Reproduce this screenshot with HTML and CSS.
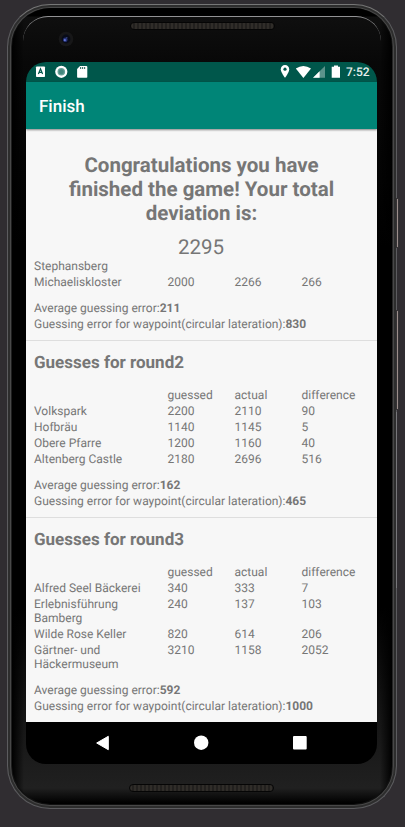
FILE: index.html
```html
<!DOCTYPE html>
<html lang="en">
<head>
<meta charset="utf-8">
<title>Finish</title>
<link rel="stylesheet" href="styles.css">
</head>
<body>
<div class="phone">
  <i class="key power"></i><i class="key volume"></i><i class="edge"></i>
  <div class="body">
    <div class="glass">
      <header class="top">
        <svg class="camera" width="16" height="16" viewBox="0 0 16 16"><circle cx="8" cy="8" r="7.3" fill="#171718"/><circle cx="8" cy="8" r="4.4" fill="#080b18"/><circle cx="7.3" cy="8.7" r="2.3" fill="#263276"/><circle cx="6.8" cy="9.2" r="1.1" fill="#6375d5"/><circle cx="8.8" cy="6.8" r=".8" fill="#34427c"/></svg>
        <div class="speaker"></div>
      </header>
      <main class="screen">
        <div class="status">
          <svg class="left-icons" width="54" height="20" viewBox="0 0 54 20">
            <rect x="1" y="4.5" width="9" height="10.5" rx=".8" fill="#fff"/>
            <path d="M3.4 12 5.5 6.8 7.6 12M4.2 10.3h2.6" fill="none" stroke="#00574b" stroke-width="1.2"/>
            <circle cx="26.3" cy="9.8" r="6.1" fill="#fff"/><circle cx="26.3" cy="9.8" r="3.8" fill="#69a098"/><circle cx="26.3" cy="9.8" r="2.5" fill="#43877d"/>
            <path d="M45 4h6.3q1 0 1 1v10q0 .7-.8.7h-8.600q-.8 0-.8-.7V7z" fill="#fff"/><path d="M45.6 5v2M47.6 5v2M49.6 5v2" stroke="#42786f" stroke-width="1.2"/>
          </svg>
          <svg class="right-icons" width="62" height="20" viewBox="0 0 62 20">
            <path d="M5 3C2.6 3 .8 4.8.8 7.2.8 10.300 5 15.800 5 15.800s4.200-5.500 4.200-8.600C9.200 4.800 7.400 3 5 3z" fill="#fff"/><circle cx="5" cy="7.200" r="1.600" fill="#00574b"/>
            <path d="M15.800 6.600Q23.400 1.200 31 6.600L23.400 15.900z" fill="#fff"/>
            <path d="M45 4v11.800H33z" fill="#5c938b"/><path d="M39.600 9.300v6.500H33z" fill="#fff"/>
            <path d="M54 3.400h4v1.400h2v11h-8.300v-11H54z" fill="#fff"/>
          </svg>
          <span class="clock">7:52</span>
        </div>
        <div class="appbar">Finish</div>
        <div class="content">
          <h1>Congratulations you have<br>finished the game! Your total<br>deviation is:</h1>
          <div class="total">2295</div>
          <section class="round first">
            <div class="table">
              <div class="row"><span>Stephansberg</span></div>
              <div class="row"><span>Michaeliskloster</span><span>2000</span><span>2266</span><span>266</span></div>
            </div>
            <p>Average guessing error:<b>211</b></p>
            <p>Guessing error for waypoint(circular lateration):<b>830</b></p>
          </section>
          <section class="round">
            <h2>Guesses for round2</h2>
            <div class="table">
              <div class="row"><span></span><span>guessed</span><span>actual</span><span>difference</span></div>
              <div class="row"><span>Volkspark</span><span>2200</span><span>2110</span><span>90</span></div>
              <div class="row"><span>Hofbräu</span><span>1140</span><span>1145</span><span>5</span></div>
              <div class="row"><span>Obere Pfarre</span><span>1200</span><span>1160</span><span>40</span></div>
              <div class="row"><span>Altenberg Castle</span><span>2180</span><span>2696</span><span>516</span></div>
            </div>
            <p>Average guessing error:<b>162</b></p>
            <p>Guessing error for waypoint(circular lateration):<b>465</b></p>
          </section>
          <section class="round">
            <h2>Guesses for round3</h2>
            <div class="table">
              <div class="row"><span></span><span>guessed</span><span>actual</span><span>difference</span></div>
              <div class="row"><span>Alfred Seel Bäckerei</span><span>340</span><span>333</span><span>7</span></div>
              <div class="row"><span>Erlebnisführung<br>Bamberg</span><span>240</span><span>137</span><span>103</span></div>
              <div class="row"><span>Wilde Rose Keller</span><span>820</span><span>614</span><span>206</span></div>
              <div class="row"><span>Gärtner- und<br>Häckermuseum</span><span>3210</span><span>1158</span><span>2052</span></div>
            </div>
            <p>Average guessing error:<b>592</b></p>
            <p>Guessing error for waypoint(circular lateration):<b>1000</b></p>
          </section>
        </div>
        <nav class="nav">
          <svg width="14" height="16" viewBox="0 0 14 16"><path d="M12.300 1.300v13.400L.7 8z" fill="#fff" stroke="#fff" stroke-linejoin="round"/></svg>
          <svg width="16" height="16" viewBox="0 0 16 16"><circle cx="7.200" cy="7.700" r="7.200" fill="#fff"/></svg>
          <svg width="14" height="16" viewBox="0 0 14 16"><rect y="1" width="13.700" height="13.500" rx="1" fill="#fff"/></svg>
        </nav>
      </main>
      <footer class="bottom"><div class="speaker"></div></footer>
    </div>
  </div>
</div>
</body>
</html>
```
FILE: styles.css
```css
* { box-sizing: border-box; }
body {
  margin: 0;
  width: 405px;
  height: 827px;
  overflow: hidden;
  background: #302d31;
  font-family: Roboto, sans-serif;
  color: #767676;
  text-rendering: geometricPrecision;
}
.phone {
  position: relative;
  width: 390px;
  height: 805px;
  margin: 4px 0 0 7px;
}
.body {
  height: 100%;
  padding: 3px 4px 4px;
  border: 1px solid #5c5c5f;
  border-top-color: #777;
  border-radius: 43px;
  background: linear-gradient(90deg, #3b3b3b, #222 3px, #111 5px, #111 calc(100% - 5px), #2b2b2b calc(100% - 3px), #3b3b3b);
  box-shadow: inset 0 0 0 2px #2d2d2d, inset 0 0 0 3px #484848;
}
.glass {
  display: flex;
  flex-direction: column;
  height: 100%;
  padding: 8px 15px 0 14px;
  border-radius: 39px;
  background:
    linear-gradient(90deg, #000, transparent 12px, transparent calc(100% - 12px), #000),
    linear-gradient(#000 8px, #0f0f0f 9px, #080808 54px, #000 240px, #000 600px, #151515 710px, #202020 780px, #000 795px);
}
.top {
  display: flex;
  height: 46px;
  margin: 0 -4px 0 -3px;
  border-top: 1px solid #929294;
  border-radius: 25px 25px 0 0;
}
.camera { margin: 14px 0 0 35px; }
.speaker {
  width: 145px;
  height: 8px;
  border: 1px solid #050505;
  border-radius: 4px;
  background: repeating-linear-gradient(90deg, #302d29 0 2px, #22201e 2px 4px);
}
.top .speaker { margin: 5px 0 0 56px; }
.screen {
  display: flex;
  flex-direction: column;
  width: 351px;
  height: 702px;
  flex: none;
  overflow: hidden;
  border-radius: 20px;
  background: #000;
}
.status {
  display: flex;
  height: 20px;
  flex: none;
  background: #00574b;
}
.left-icons { margin-left: 9px; }
.right-icons { margin-left: 191px; }
.clock {
  margin-left: 4px;
  color: #e7efed;
  font: 500 12px/20px Roboto, sans-serif;
}
.appbar {
  position: relative;
  height: 47px;
  flex: none;
  padding-left: 13px;
  background: #008577;
  box-shadow: 0 1px 2px #0007;
  color: #fff;
  font-size: 17px;
  font-weight: 500;
  line-height: 51px;
}
.content {
  height: 593px;
  flex: none;
  padding-top: 25px;
  background: #f7f7f7;
  font-size: 12px;
  line-height: 14px;
}
h1 {
  margin: 0;
  font-size: 20.500px;
  line-height: 24px;
  text-align: center;
}
.total {
  margin: 10px 1px -1px 0;
  font-size: 20.500px;
  line-height: 24px;
  text-align: center;
}
.round {
  height: 177px;
  padding: 11px 8px 0;
  border-top: 1px solid #dedede;
}
.round.first { height: 81px; padding-top: 0; border: 0; }
h2 {
  margin: 0 0 14px;
  font-size: 17px;
  line-height: 22px;
}
.row {
  display: grid;
  grid-template-columns: 133.500px 67px 67px 1fr;
  margin-bottom: 2px;
  min-height: 14px;
}
.table { margin-bottom: 12px; }
p { margin: 0 0 2px; white-space: nowrap; }
.nav {
  display: flex;
  justify-content: space-between;
  height: 42px;
  padding: 13px 70px 0;
}
.bottom { display: flex; justify-content: center; padding-top: 20px; }
.key, .edge { position: absolute; width: 3px; left: 389px; }
.power { top: 194px; height: 50px; background: #9b8e8b; border: 1px solid #343234; }
.volume { top: 306px; height: 100px; background: #9b8e8b; border: 1px solid #343234; }
.edge { top: 408px; height: 176px; width: 1px; background: #77777a; }
```
